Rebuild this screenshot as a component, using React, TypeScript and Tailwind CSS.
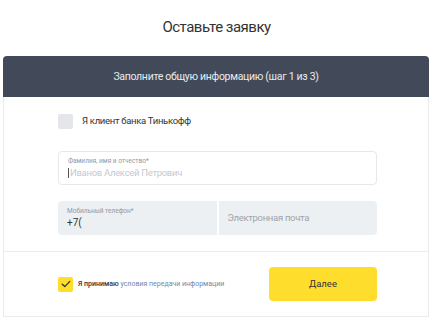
import React from "react";

export default function App() {
  return (
    <div className="w-[433px] h-[320px] bg-white overflow-hidden" style={{ fontFamily: "Roboto, 'Noto Sans', sans-serif" }}>
      <div className="h-[56px] flex items-center justify-center pb-[2px]">
        <h1 className="text-[15px] text-[#333333] font-normal leading-none tracking-[-0.5px]">Оставьте заявку</h1>
      </div>
      <div className="mx-[3px] w-[426px]">
        <div className="h-[41px] bg-[#424a59] rounded-t-[4px] flex items-center justify-center">
          <span className="text-[10.5px] text-[#e8eaee] tracking-[-0.3px]">Заполните общую информацию (шаг 1 из 3)</span>
        </div>
        <div className="border border-t-0 border-[#e9ebee] h-[220px] flex flex-col">
          <div className="pl-[54px] pr-[51px] pt-[17px] pb-[16px] flex flex-col border-b border-[#e9ebee]">
            <div className="flex items-center gap-[9px] h-[15px]">
              <div className="w-[15px] h-[15px] rounded-[2px] bg-[#e4e6ea]" />
              <span className="text-[9.5px] text-[#333333] tracking-[-0.3px]">Я клиент банка Тинькофф</span>
            </div>
            <div className="mt-[22px] h-[34px] rounded-[4px] border border-[#e6e8ec] bg-white px-[9px] flex flex-col justify-center">
              <span className="text-[6.5px] text-[#9299a2] leading-[9px]">Фамилия, имя и отчество*</span>
              <span className="text-[9.5px] text-[#c5cad2] leading-[13px] tracking-[-0.3px] flex items-center">
                <span className="inline-block w-[1px] h-[10px] bg-[#555] mr-[1px]" />
                Иванов Алексей Петрович
              </span>
            </div>
            <div className="mt-[16px] h-[34px] grid grid-cols-2 gap-[2px]">
              <div className="rounded-l-[4px] bg-[#edf0f3] px-[9px] flex flex-col justify-center">
                <span className="text-[6.5px] text-[#9299a2] leading-[9px]">Мобильный телефон*</span>
                <span className="text-[10px] text-[#333333] leading-[13px]">+7(</span>
              </div>
              <div className="rounded-r-[4px] bg-[#edf0f3] px-[9px] flex items-center">
                <span className="text-[9.5px] text-[#9ea4ac] tracking-[-0.3px]">Электронная почта</span>
              </div>
            </div>
          </div>
          <div className="pl-[54px] pr-[51px] flex-1 flex items-center justify-between">
            <div className="flex items-center gap-[5px]">
              <div className="w-[15px] h-[15px] rounded-[2px] bg-[#ffdd2d] flex items-center justify-center">
                <svg width="10" height="8" viewBox="0 0 10 8" fill="none">
                  <path d="M1.2 4.2L3.8 6.6L8.8 1.4" stroke="#333" strokeWidth="1.3" strokeLinecap="round" strokeLinejoin="round" />
                </svg>
              </div>
              <span className="text-[7px] text-[#6c8ab0]">
                <span className="text-[#333333] font-medium">Я принимаю</span> условия передачи информации
              </span>
            </div>
            <button className="w-[108px] h-[34px] rounded-[4px] bg-[#ffdd2d] text-[9.5px] text-[#333333]">Далее</button>
          </div>
        </div>
      </div>
    </div>
  );
}
